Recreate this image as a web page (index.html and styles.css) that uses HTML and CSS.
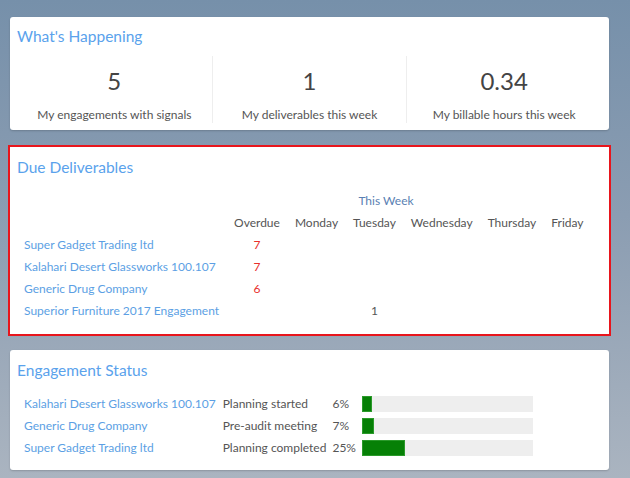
FILE: index.html
```html
<!DOCTYPE html>
<html>
<head>
<meta charset="utf-8">
<link rel="stylesheet" href="styles.css">
</head>
<body>
<div class="page">
  <section class="card card-happening">
    <h2 class="card-title">What's Happening</h2>
    <div class="stats">
      <div class="stat">
        <div class="stat-value">5</div>
        <div class="stat-label">My engagements with signals</div>
      </div>
      <div class="stat">
        <div class="stat-value">1</div>
        <div class="stat-label">My deliverables this week</div>
      </div>
      <div class="stat">
        <div class="stat-value">0.34</div>
        <div class="stat-label">My billable hours this week</div>
      </div>
    </div>
  </section>

  <section class="card card-due">
    <h2 class="card-title">Due Deliverables</h2>
    <table class="due-table">
      <thead>
        <tr class="week-row">
          <th></th>
          <th></th>
          <th colspan="5" class="week-label">This Week</th>
        </tr>
        <tr class="day-row">
          <th></th>
          <th>Overdue</th>
          <th>Monday</th>
          <th>Tuesday</th>
          <th>Wednesday</th>
          <th>Thursday</th>
          <th>Friday</th>
        </tr>
      </thead>
      <tbody>
        <tr>
          <td class="name"><a href="#">Super Gadget Trading ltd</a></td>
          <td class="overdue">7</td>
          <td></td><td></td><td></td><td></td><td></td>
        </tr>
        <tr>
          <td class="name"><a href="#">Kalahari Desert Glassworks 100.107</a></td>
          <td class="overdue">7</td>
          <td></td><td></td><td></td><td></td><td></td>
        </tr>
        <tr>
          <td class="name"><a href="#">Generic Drug Company</a></td>
          <td class="overdue">6</td>
          <td></td><td></td><td></td><td></td><td></td>
        </tr>
        <tr>
          <td class="name"><a href="#">Superior Furniture 2017 Engagement</a></td>
          <td></td>
          <td></td>
          <td class="count">1</td>
          <td></td><td></td><td></td>
        </tr>
      </tbody>
    </table>
  </section>

  <section class="card card-status">
    <h2 class="card-title">Engagement Status</h2>
    <table class="status-table">
      <tbody>
        <tr>
          <td class="name"><a href="#">Kalahari Desert Glassworks 100.107</a></td>
          <td class="status">Planning started</td>
          <td class="pct">6%</td>
          <td class="bar-cell"><div class="bar"><div class="bar-fill" style="width:6%"></div></div></td>
        </tr>
        <tr>
          <td class="name"><a href="#">Generic Drug Company</a></td>
          <td class="status">Pre-audit meeting</td>
          <td class="pct">7%</td>
          <td class="bar-cell"><div class="bar"><div class="bar-fill" style="width:7%"></div></div></td>
        </tr>
        <tr>
          <td class="name"><a href="#">Super Gadget Trading ltd</a></td>
          <td class="status">Planning completed</td>
          <td class="pct">25%</td>
          <td class="bar-cell"><div class="bar"><div class="bar-fill" style="width:25%"></div></div></td>
        </tr>
      </tbody>
    </table>
  </section>
</div>
</body>
</html>
```

FILE: styles.css
```css
html {
  height: 100%;
  background: linear-gradient(to bottom, #7690aa 0%, #8b9db2 45%, #aab4c0 100%);
}

body {
  margin: 0;
  min-height: 100%;
  font-family: "Lato", "Liberation Sans", sans-serif;
  color: #555;
  font-size: 12px;
}

.page {
  padding: 17px 21px 0 10px;
  display: flex;
  flex-direction: column;
}

.card {
  background: #fff;
  border-radius: 3px;
  box-shadow: 0 1px 2px rgba(0, 0, 0, 0.18);
  padding: 9px 8px 7px 7px;
}

.card-title {
  margin: 0;
  font-size: 15.5px;
  font-weight: normal;
  line-height: 20px;
  color: #5aa2ec;
}

/* What's happening */
.stats {
  margin-top: 10px;
  display: grid;
  grid-template-columns: 1fr 1fr 1fr;
}

.stat {
  text-align: center;
  padding-top: 10px;
  height: 57px;
}

.stat + .stat {
  border-left: 1px solid #eeeeee;
}

.stat-value {
  font-size: 24px;
  line-height: 30px;
  color: #444;
}

.stat-label {
  margin-top: 11px;
  font-size: 12px;
  line-height: 16px;
  color: #555;
}

/* Due deliverables */
.card-due {
  margin-top: 17px;
  border-radius: 0;
  outline: 2px solid #e8151c;
  padding: 10px 8px 12px 7px;
}

.due-table {
  margin-top: 12px;
  border-collapse: collapse;
  font-size: 12px;
}

.due-table th,
.due-table td {
  padding: 0 7.5px;
  height: 22px;
  line-height: 22px;
  white-space: nowrap;
}

.due-table th {
  font-weight: normal;
  color: #555;
  text-align: center;
}

.due-table .week-row th {
  height: 23px;
}

.due-table .week-label {
  text-align: left;
  padding-left: 71px;
  color: #5a7fb3;
}

.due-table td {
  text-align: center;
}

.due-table td.name {
  text-align: left;
  padding-left: 7px;
}

.name a {
  color: #5c9fe4;
  text-decoration: none;
}

.overdue {
  color: #e8302c;
}

.count {
  color: #555;
}

/* Engagement status */
.card-status {
  margin-top: 16px;
  padding: 10px 8px 11px 7px;
}

.status-table {
  margin-top: 13px;
  border-collapse: collapse;
  font-size: 12px;
  margin-left: 4px;
}

.status-table td {
  padding: 0 3px;
  height: 22px;
  line-height: 22px;
  white-space: nowrap;
}

.status-table td.status {
  padding-left: 4px;
}

.bar-cell {
  vertical-align: middle;
}

.bar {
  width: 171px;
  height: 16px;
  background: #eeeeee;
}

.bar-fill {
  height: 100%;
  background: #068006;
  box-shadow: inset 0 0 0 1px #2a9a2a;
}
```
